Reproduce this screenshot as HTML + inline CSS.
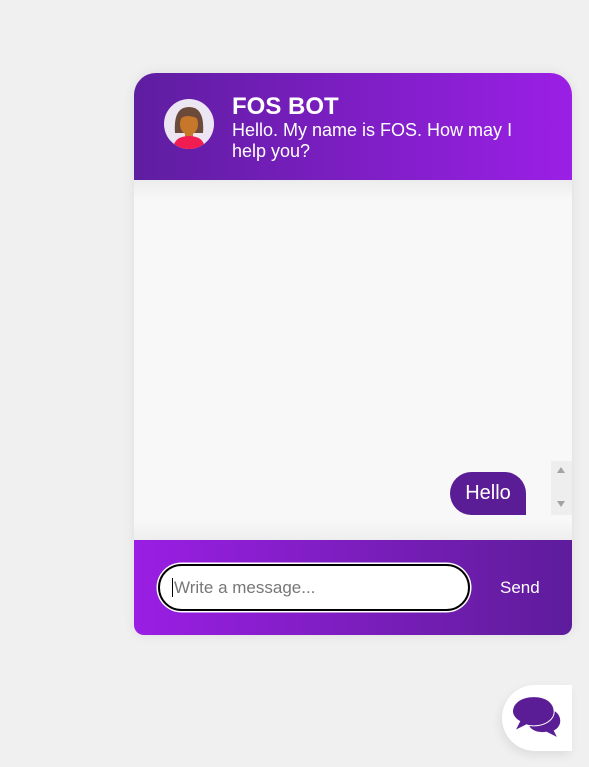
<!DOCTYPE html>
<html><head><meta charset="utf-8"><style>
*{box-sizing:border-box;margin:0;padding:0}
body{width:589px;height:767px;background:#f0f0f0;font-family:"Liberation Sans",Arial,sans-serif;position:relative;overflow:hidden}
.card{position:absolute;left:134px;top:73px;width:438px;height:562px;border-radius:22px 22px 10px 10px;overflow:hidden;box-shadow:0 0 12px rgba(0,0,0,.08);background:#f8f8f8}
.hdr{position:absolute;left:0;top:0;width:438px;height:107px;background:linear-gradient(90deg,#5e1ea0,#9b1fe6)}
.av{position:absolute;left:30px;top:26px;width:50px;height:50px;border-radius:50%;background:#ece6f2;overflow:hidden}
.t1{position:absolute;left:98px;top:20px;color:#fff;font-weight:bold;font-size:24px}
.t2{position:absolute;left:98px;top:47px;width:290px;color:#fff;font-size:18px;line-height:21px}
.body{position:absolute;left:0;top:107px;width:438px;height:360px;background:linear-gradient(#ececec,#f8f8f8 20px,#f8f8f8 340px,#eeeeee)}
.bub{position:absolute;left:316px;top:292px;width:76px;height:43px;background:#5a1d96;color:#fff;font-size:20px;line-height:43px;text-align:center;border-radius:22px 22px 0 22px}
.sb{position:absolute;left:417px;top:281px;width:21px;height:54px;background:#eeeeee}
.sb div{position:absolute;left:6px;width:0;height:0;border-left:4.5px solid transparent;border-right:4.5px solid transparent}
.ftr{position:absolute;left:0;top:467px;width:438px;height:95px;background:linear-gradient(90deg,#9a1ee4,#6a1da8 80%,#5e1c9c)}
.inp{position:absolute;left:24px;top:24px;width:312px;height:47px;border-radius:24px;background:#fff;border:2px solid #000;box-shadow:0 0 0 1.5px #fff;font-size:17px;color:#777;padding:12px 0 0 12px}
.inp span{border-left:1px solid #000;padding-left:1px}
.send{position:absolute;left:366px;top:38px;color:#fff;font-size:17px}
.fab{position:absolute;left:502px;top:685px;width:70px;height:66px;background:#fff;border-radius:33px 0 0 33px;box-shadow:-2px 4px 10px rgba(0,0,0,.08)}
</style></head><body>
<div class="card">
 <div class="body">
  <div class="bub">Hello</div>
  <div class="sb"><div style="top:6px;border-bottom:6px solid #a3a3a3"></div><div style="top:40px;border-top:6px solid #a3a3a3"></div></div>
 </div>
 <div class="hdr">
  <div class="av"><svg width="50" height="50" viewBox="0 0 50 50">
   <path d="M11 34 Q9 8 25 8 Q41 8 39 34 Z" fill="#6b4a3a"/>
   <ellipse cx="25" cy="25" rx="9" ry="11" fill="#c7772a"/>
   <path d="M15 22 Q20 13 35 20 Q33 11 25 11 Q16 11 15 22Z" fill="#6b4a3a"/>
   <rect x="21" y="33" width="8" height="5" fill="#c7772a"/>
   <path d="M9 50 Q10 37 25 37 Q40 37 41 50Z" fill="#f01c52"/>
  </svg></div>
  <div class="t1">FOS BOT</div>
  <div class="t2">Hello. My name is FOS. How may I help you?</div>
 </div>
 <div class="ftr">
  <div class="inp"><span>Write a message...</span></div>
  <div class="send">Send</div>
 </div>
</div>
<div class="fab"><svg style="position:absolute;left:11px;top:11px" width="48" height="42" viewBox="0 0 46 40">
 <path d="M24 12 C38 10 47 17 45 26 C44 30 41 32 39 33 L42 39 L32 34 C24 36 16 32 15 27 Z" fill="#5a1d96"/>
 <ellipse cx="20" cy="15" rx="20" ry="14" fill="#fff"/>
 <path d="M20 1 C32 1 39 7 39 15 C39 22 31 28 20 28 C17 28 15 28 13 27 L3 32 L7 24 C3 22 0 18 0 15 C0 7 8 1 20 1Z" fill="#5a1d96"/>
</svg></div>
</body></html>
